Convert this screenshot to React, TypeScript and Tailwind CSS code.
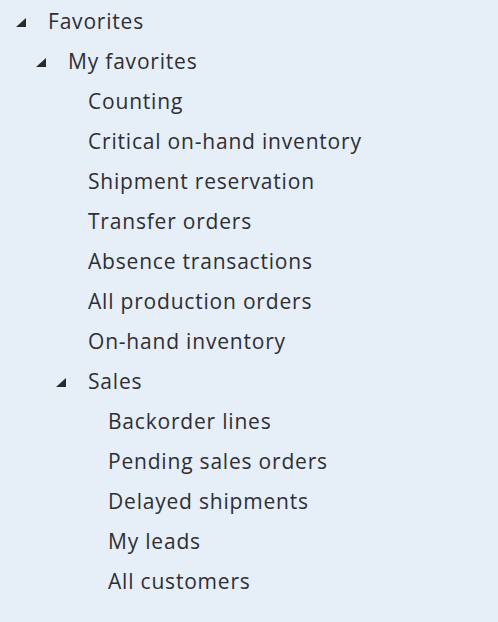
import React from 'react';

type Node = { label: string; depth: number; expanded?: boolean };

const rows: Node[] = [
  { label: 'Favorites', depth: 0, expanded: true },
  { label: 'My favorites', depth: 1, expanded: true },
  { label: 'Counting', depth: 2 },
  { label: 'Critical on-hand inventory', depth: 2 },
  { label: 'Shipment reservation', depth: 2 },
  { label: 'Transfer orders', depth: 2 },
  { label: 'Absence transactions', depth: 2 },
  { label: 'All production orders', depth: 2 },
  { label: 'On-hand inventory', depth: 2 },
  { label: 'Sales', depth: 2, expanded: true },
  { label: 'Backorder lines', depth: 3 },
  { label: 'Pending sales orders', depth: 3 },
  { label: 'Delayed shipments', depth: 3 },
  { label: 'My leads', depth: 3 },
  { label: 'All customers', depth: 3 },
];

const pad = ['pl-0', 'pl-[20px]', 'pl-[40px]', 'pl-[60px]'];

// expanded-node glyph (filled corner triangle)
function Expander() {
  return (
    <svg width="10" height="9" viewBox="0 0 10 9" className="ml-[16px] mt-[3px]">
      <polygon points="10,0 10,9 0,9" fill="#2a2a2a" />
    </svg>
  );
}

export default function App() {
  return (
    <div className="w-[498px] h-[622px] bg-[#e6eef8] overflow-hidden pt-px font-['Open_Sans',sans-serif] text-[21px] tracking-[0.8px] text-[#2e2e33]">
      {rows.map((r, i) => (
        <div key={i} className={`h-[40px] flex items-center ${pad[r.depth]}`}>
          <div className="w-[48px] flex items-center">{r.expanded && <Expander />}</div>
          <span className="leading-none">{r.label}</span>
        </div>
      ))}
    </div>
  );
}
